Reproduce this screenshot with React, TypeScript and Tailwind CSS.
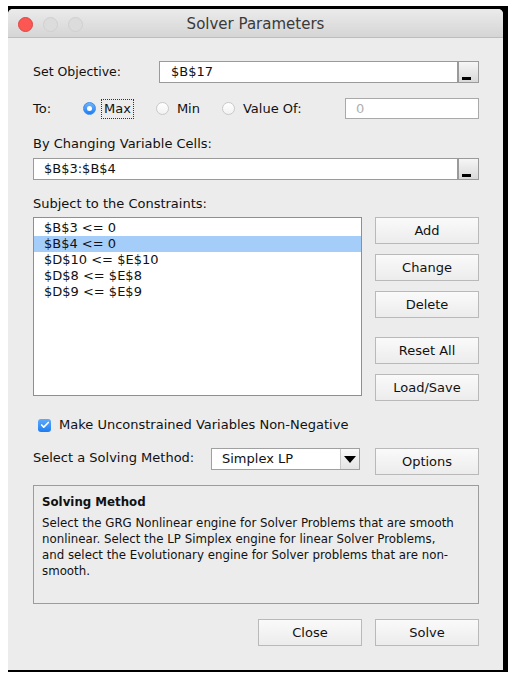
import { Check } from 'lucide-react'

const font = { fontFamily: '"DejaVu Sans", Verdana, sans-serif' }

function RefButton() {
  return (
    <div className="relative w-[21px] h-full border border-[#9a9a9a] bg-gradient-to-b from-[#f6f6f6] to-[#d9d9d9]">
      <div className="absolute left-[3px] bottom-[2px] w-[9px] h-[3px] bg-black" />
    </div>
  )
}

function Radio({ checked }: { checked?: boolean }) {
  if (checked) {
    return (
      <span className="flex shrink-0 items-center justify-center w-[13px] h-[13px] rounded-full bg-gradient-to-b from-[#6cb3fa] to-[#1b7cf4] border border-[#3b8ef0]">
        <span className="w-[5px] h-[5px] rounded-full bg-white" />
      </span>
    )
  }
  return <span className="block shrink-0 w-[13px] h-[13px] rounded-full bg-gradient-to-b from-white to-[#f2f2f2] border border-[#c9c9c9]" />
}

function Btn({ children, className = '' }: { children: React.ReactNode; className?: string }) {
  return (
    <div
      className={`flex items-center justify-center w-[104px] h-[27px] border border-[#b9b9b9] bg-gradient-to-b from-[#fafafa] to-[#ececec] text-[13px] text-[#111] ${className}`}
    >
      {children}
    </div>
  )
}

const constraints = ['$B$3 <= 0', '$B$4 <= 0', '$D$10 <= $E$10', '$D$8 <= $E$8', '$D$9 <= $E$9']

export default function App() {
  return (
    <div className="min-h-screen bg-white pl-[8px] pt-[6px]" style={font}>
      <div className="w-[500px] bg-black pt-[3px] pr-[5px] pb-[2px]">
        <div className="bg-[#ececec] rounded-t-[5px] overflow-hidden">
          {/* Title bar */}
          <div className="relative h-[29px] flex items-center justify-center bg-gradient-to-b from-[#ebebeb] to-[#d5d5d5] border-b border-[#bdbdbd]">
            <div className="absolute left-[10px] top-[8px] flex gap-[10px]">
              <span className="w-[15px] h-[15px] rounded-full bg-[#fc5753] border border-[#e0443e]" />
              <span className="w-[15px] h-[15px] rounded-full bg-[#dcdcdc] border border-[#d0d0d0]" />
              <span className="w-[15px] h-[15px] rounded-full bg-[#dcdcdc] border border-[#d0d0d0]" />
            </div>
            <span className="mt-[2px] text-[15px] text-[#3a3a3a]">Solver Parameters</span>
          </div>

          <div className="pl-[25px] pr-[24px] pb-[24px] text-[12px] text-[#111]">
            {/* Set objective */}
            <div className="mt-[23px] flex items-center h-[22px]">
              <span className="w-[126px] text-[12.5px]">Set Objective:</span>
              <div className="flex-1 flex h-full">
                <div className="flex-1 bg-white border border-[#9a9a9a] flex items-center pl-[11px] text-[13px]">$B$17</div>
                <RefButton />
              </div>
            </div>

            {/* To */}
            <div className="mt-[15px] flex items-center h-[21px]">
              <span className="w-[50px] text-[13px]">To:</span>
              <Radio checked />
              <span className="ml-[5px] px-[2px] border border-dotted border-[#333] text-[13px] leading-[18px]">Max</span>
              <span className="ml-[22px]">
                <Radio />
              </span>
              <span className="ml-[8px] text-[13px]">Min</span>
              <span className="ml-[22px]">
                <Radio />
              </span>
              <span className="ml-[8px] text-[13px]">Value Of:</span>
              <div className="ml-auto w-[134px] h-full bg-white border border-[#a9a9a9] flex items-center pl-[10px] text-[13px] text-[#b0b0b0]">0</div>
            </div>

            {/* By changing */}
            <div className="mt-[17px] h-[16px] leading-[16px] text-[13px]">By Changing Variable Cells:</div>
            <div className="mt-[6px] flex h-[22px]">
              <div className="flex-1 bg-white border border-[#9a9a9a] flex items-center pl-[10px] text-[13px]">$B$3:$B$4</div>
              <RefButton />
            </div>

            {/* Constraints */}
            <div className="mt-[16px] h-[16px] leading-[16px] text-[13px]">Subject to the Constraints:</div>
            <div className="mt-[5px] flex justify-between">
              <div className="w-[329px] h-[179px] bg-white border border-[#8f8f8f] pt-[2px] text-[13px]">
                {constraints.map((c, i) => (
                  <div key={c} className={`h-[16px] leading-[16px] pl-[10px] ${i === 1 ? 'bg-[#a5cdfa]' : ''}`}>
                    {c}
                  </div>
                ))}
              </div>
              <div className="flex flex-col">
                <Btn>Add</Btn>
                <Btn className="mt-[10px]">Change</Btn>
                <Btn className="mt-[10px]">Delete</Btn>
                <Btn className="mt-[19px]">Reset All</Btn>
                <Btn className="mt-[10px]">Load/Save</Btn>
              </div>
            </div>

            {/* Checkbox */}
            <div className="mt-[16px] flex items-center h-[16px] pl-[5px]">
              <span className="flex items-center justify-center w-[13px] h-[13px] rounded-[3px] bg-gradient-to-b from-[#5eabf9] to-[#1a7cf4]">
                <Check className="w-[10px] h-[10px] text-white" strokeWidth={4} />
              </span>
              <span className="ml-[8px] text-[13px]">Make Unconstrained Variables Non-Negative</span>
            </div>

            {/* Solving method */}
            <div className="mt-[15px] flex items-start h-[26px]">
              <span className="w-[178px] text-[13px] leading-[20px]">Select a Solving Method:</span>
              <div className="w-[149px] h-[22px] flex bg-white border border-[#a0a0a0]">
                <span className="flex-1 flex items-center pl-[10px] text-[13px]">Simplex LP</span>
                <span className="w-[19px] flex items-center justify-center border-l border-[#c8c8c8] bg-gradient-to-b from-[#fafafa] to-[#e4e4e4]">
                  <span className="w-0 h-0 border-l-[6px] border-r-[6px] border-t-[7px] border-l-transparent border-r-transparent border-t-black" />
                </span>
              </div>
              <Btn className="ml-auto">Options</Btn>
            </div>

            {/* Description box */}
            <div className="mt-[11px] h-[119px] border border-[#9c9c9c] px-[8px] pt-[8px] text-[11.8px] leading-[16px]">
              <div className="font-bold">Solving Method</div>
              <p className="mt-[5px]">
                Select the GRG Nonlinear engine for Solver Problems that are smooth
                <br />
                nonlinear. Select the LP Simplex engine for linear Solver Problems,
                <br />
                and select the Evolutionary engine for Solver problems that are non-
                <br />
                smooth.
              </p>
            </div>

            {/* Bottom buttons */}
            <div className="mt-[15px] flex justify-end gap-[13px]">
              <Btn className="w-[103px]">Close</Btn>
              <Btn>Solve</Btn>
            </div>
          </div>
        </div>
      </div>
    </div>
  )
}
